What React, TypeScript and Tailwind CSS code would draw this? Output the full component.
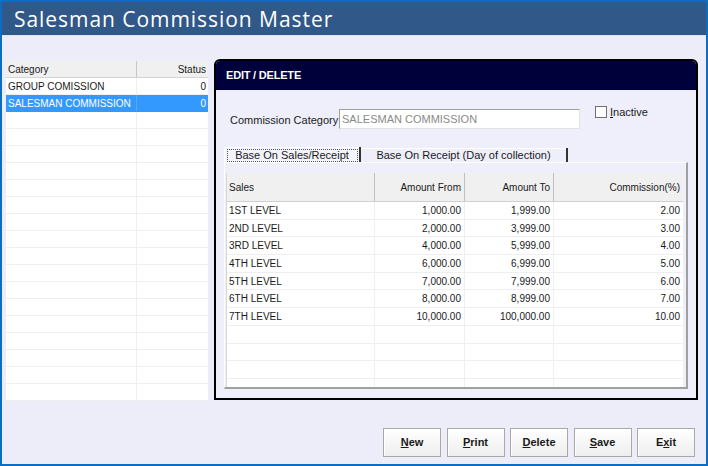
import React from "react";

const font = { fontFamily: '"Liberation Sans", Arial, sans-serif' };

const leftRows = [
  { c: "GROUP COMISSION", s: "0" },
  { c: "SALESMAN COMMISSION", s: "0", sel: true },
];

const data = [
  ["1ST LEVEL", "1,000.00", "1,999.00", "2.00"],
  ["2ND LEVEL", "2,000.00", "3,999.00", "3.00"],
  ["3RD LEVEL", "4,000.00", "5,999.00", "4.00"],
  ["4TH LEVEL", "6,000.00", "6,999.00", "5.00"],
  ["5TH LEVEL", "7,000.00", "7,999.00", "6.00"],
  ["6TH LEVEL", "8,000.00", "8,999.00", "7.00"],
  ["7TH LEVEL", "10,000.00", "100,000.00", "10.00"],
];

function Btn({ pre, u, post }: { pre?: string; u: string; post?: string }) {
  return (
    <div className="w-[58px] h-[29px] border border-[#a9a9a9] bg-gradient-to-b from-white to-[#eeeeee] flex items-center justify-center text-[11px] font-bold text-[#1a1a1a] shadow-[inset_1px_1px_0_#ffffff]">
      <span>
        {pre}
        <span className="underline">{u}</span>
        {post}
      </span>
    </div>
  );
}

export default function App() {
  const leftEmpty = Array.from({ length: 17 });
  const gridEmpty = Array.from({ length: 4 });
  return (
    <div
      className="w-[708px] h-[466px] border-2 border-[#0b6dc4] bg-[#ecedf9] flex flex-col overflow-hidden"
      style={font}
    >
      <div className="h-[34px] shrink-0 bg-[#305888] border-b border-[#dfe4f2] flex items-center pl-[12px] pt-[2px]">
        <span
          className="text-white text-[21px] tracking-[0.95px]"
          style={{ fontFamily: '"Open Sans", "DejaVu Sans", sans-serif' }}
        >
          Salesman Commission Master
        </span>
      </div>

      <div className="flex items-start pl-[4px] pt-[24px]">
        {/* left list */}
        <div className="w-[202px] mt-[1px] bg-white text-[10px] text-[#1a1a1a]">
          <div className="flex h-[17px] bg-[#f0f0f0] border-b border-[#d4d4d4]">
            <div className="w-[131px] border-r border-[#c8c8c8] pl-[2px] flex items-center">Category</div>
            <div className="flex-1 flex items-center justify-end pr-[2px]">Status</div>
          </div>
          {leftRows.map((r) => (
            <div
              key={r.c}
              className={`flex h-[17px] border-b ${r.sel ? "bg-[#3399ff] text-white border-[#3399ff]" : "border-[#efefef]"}`}
            >
              <div className={`w-[131px] border-r pl-[2px] flex items-center ${r.sel ? "border-[#5aa8ff]" : "border-[#efefef]"}`}>{r.c}</div>
              <div className="flex-1 flex items-center justify-end pr-[2px]">{r.s}</div>
            </div>
          ))}
          {leftEmpty.map((_, i) => (
            <div key={i} className="flex h-[17px] border-b border-[#efefef]">
              <div className="w-[131px] border-r border-[#efefef]" />
              <div className="flex-1" />
            </div>
          ))}
        </div>

        {/* right panel */}
        <div className="ml-[6px] -mt-[1px] w-[484px] h-[341px] border-2 border-black rounded-t-[6px] bg-[#eeeffa] flex flex-col overflow-hidden">
          <div className="h-[29px] shrink-0 bg-[#00003a] flex items-center pl-[10px]">
            <span className="text-white text-[11px] font-bold tracking-[-0.2px]">EDIT / DELETE</span>
          </div>
          <div className="flex items-start pl-[14px] mt-[19px]">
            <div className="w-[109px] h-[20px] flex items-center pt-[2px] text-[11px] text-[#1a1a1a]">Commission Category</div>
            <div className="w-[241px] h-[20px] bg-white border-t border-l border-[#a0a0a0] border-b border-r border-b-[#e3e3e3] border-r-[#e3e3e3] flex items-center pl-[2px] text-[11px] text-[#8a8a8a]">
              SALESMAN COMMISSION
            </div>
            <div className="ml-[15px] -mt-[5px] flex items-center gap-[3px]">
              <div className="w-[12px] h-[12px] bg-white border border-[#707070]" />
              <span className="text-[11px] text-[#1a1a1a]">
                <span className="underline">I</span>nactive
              </span>
            </div>
          </div>

          {/* tabs */}
          <div className="flex items-end pl-[8px] mt-[18px] h-[15px]">
            <div className="w-[135px] h-[15px] border-t border-l border-white bg-[#f3f3fb] flex items-center justify-center">
              <div className="w-[131px] h-[13px] border border-dotted border-[#555] flex items-center justify-center text-[11px] text-[#1a1a1a]">
                Base On Sales/Receipt
              </div>
            </div>
            <div className="w-[2px] h-[15px] bg-[#333]" />
            <div className="w-[205px] h-[14px] border-t border-white flex items-center justify-center text-[11px] text-[#1a1a1a]">
              Base On Receipt (Day of collection)
            </div>
            <div className="w-[2px] h-[14px] bg-[#333]" />
          </div>

          {/* tab page */}
          <div className="ml-[8px] w-[464px] h-[227px] border-t border-l border-white border-r-2 border-b-2 border-r-[#a0a0a0] border-b-[#a0a0a0] pt-[10px] pl-[1px] pr-[3px] flex flex-col">
            <div className="flex-1 bg-white text-[10px] text-[#1a1a1a] border-l border-[#d8d8d8] overflow-hidden">
              <div className="flex h-[29px] bg-[#f0f0f0] border-b border-[#d0d0d0]">
                <div className="w-[148px] border-r border-[#c0c0c0] flex items-center pl-[2px]">Sales</div>
                <div className="w-[90px] border-r border-[#c0c0c0] flex items-center justify-end pr-[3px]">Amount From</div>
                <div className="w-[89px] border-r border-[#c0c0c0] flex items-center justify-end pr-[3px]">Amount To</div>
                <div className="flex-1 flex items-center justify-end pr-[3px]">Commission(%)</div>
              </div>
              {data.map((r) => (
                <div key={r[0]} className="flex h-[17.7px] border-b border-[#efefef]">
                  <div className="w-[148px] border-r border-[#efefef] flex items-center pl-[2px]">{r[0]}</div>
                  <div className="w-[90px] border-r border-[#efefef] flex items-center justify-end pr-[3px]">{r[1]}</div>
                  <div className="w-[89px] border-r border-[#efefef] flex items-center justify-end pr-[3px]">{r[2]}</div>
                  <div className="flex-1 flex items-center justify-end pr-[3px]">{r[3]}</div>
                </div>
              ))}
              {gridEmpty.map((_, i) => (
                <div key={i} className="flex h-[17.7px] border-b border-[#efefef]">
                  <div className="w-[148px] border-r border-[#efefef]" />
                  <div className="w-[90px] border-r border-[#efefef]" />
                  <div className="w-[89px] border-r border-[#efefef]" />
                  <div className="flex-1" />
                </div>
              ))}
            </div>
          </div>
        </div>
      </div>

      <div className="mt-auto flex justify-end gap-[5.5px] pr-[11px] pb-[7px]">
        <Btn u="N" post="ew" />
        <Btn u="P" post="rint" />
        <Btn u="D" post="elete" />
        <Btn u="S" post="ave" />
        <Btn pre="E" u="x" post="it" />
      </div>
    </div>
  );
}
